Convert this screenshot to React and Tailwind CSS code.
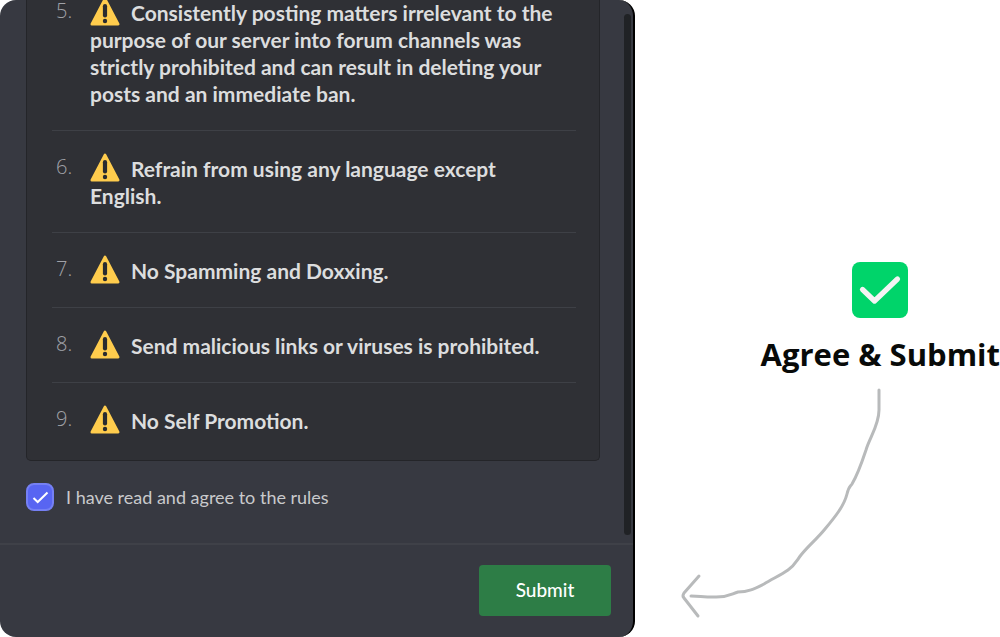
import React, { useState } from 'react';

const rules = [
  {
    id: 5,
    text: 'Consistently posting matters irrelevant to the purpose of our server into forum channels was strictly prohibited and can result in deleting your posts and an immediate ban.',
  },
  { id: 6, text: 'Refrain from using any language except English.' },
  { id: 7, text: 'No Spamming and Doxxing.' },
  { id: 8, text: 'Send malicious links or viruses is prohibited.' },
  { id: 9, text: 'No Self Promotion.' },
];

const WarningIcon = () => (
  <svg viewBox="0 0 30 29" className="-my-2 mr-[11px] inline-block h-[29px] w-[30px] align-[3px]" aria-hidden="true">
    <path d="M15 1.8 L28.2 27.2 H1.8 Z" fill="#ffcc4d" stroke="#ffcc4d" strokeWidth="2.6" strokeLinejoin="round" />
    <path d="M15 9.2 V18.4" stroke="#2a2b2f" strokeWidth="4.2" strokeLinecap="round" />
    <circle cx="15" cy="24" r="2.2" fill="#2a2b2f" />
  </svg>
);

const App = () => {
  const [agreed, setAgreed] = useState(true);

  return (
    <div className="flex min-h-screen bg-white font-['Lato',sans-serif]">
      {/* Rules dialog */}
      <div className="flex w-[63.5%] shrink-0 flex-col overflow-hidden rounded-2xl border-r-2 border-black bg-[#373941]">
        <div className="flex flex-1">
          <div className="flex-1 pl-[26px]">
            <ol className="-mt-px rounded-b-[5px] border border-t-0 border-[#242529] bg-[#2f3035] pr-[23px] pb-[3px] pl-[25px]">
              {rules.map((rule) => (
                <li
                  key={rule.id}
                  className="flex border-b border-[#3e4046] pt-6 pb-[23px] first:pt-0 last:border-b-0"
                >
                  <span className="w-[38px] shrink-0 pl-1 font-['Open_Sans',sans-serif] text-xl leading-[23px] font-light text-[#a0a2a8]">
                    {rule.id}.
                  </span>
                  <p className="pr-2 text-[21px] leading-[27px] font-bold text-[#dcddde]">
                    <WarningIcon />
                    {rule.text}
                  </p>
                </li>
              ))}
            </ol>
            <label className="mt-[22px] flex w-fit items-center gap-3 text-lg leading-7 text-[#c9cacc]">
              <span className="relative flex">
                <input
                  type="checkbox"
                  checked={agreed}
                  onChange={(e) => setAgreed(e.target.checked)}
                  className="h-7 w-7 appearance-none rounded-lg border-2 border-[#7580f4] checked:bg-[#5865f2]"
                />
                {agreed && (
                  <svg viewBox="0 0 28 28" className="pointer-events-none absolute inset-0" aria-hidden="true">
                    <path d="M7.5 15 L11.7 19 L21.5 9.5" fill="none" stroke="#fff" strokeWidth="2" />
                  </svg>
                )}
              </span>
              I have read and agree to the rules
            </label>
          </div>
          <div className="mt-[14px] mr-[2px] mb-2 ml-6 w-[7px] rounded-full bg-[#202225]" />
        </div>
        <div className="flex justify-end border-t-2 border-[#3f4148] pt-5 pr-[22px] pb-[21px]">
          <button
            type="button"
            className="h-[51px] w-[132px] rounded bg-[#2d7d46] text-[19px] font-medium text-white"
          >
            Submit
          </button>
        </div>
      </div>

      {/* Hint next to the dialog */}
      <div className="flex flex-1 flex-col items-end pt-[262px]">
        <div className="flex flex-col items-center">
          <svg viewBox="0 0 56 56" className="h-14 w-14" aria-hidden="true">
            <rect width="56" height="56" rx="8" fill="#00d46a" />
            <path
              d="M10.5 27.5 L22.5 39 L45.5 17"
              fill="none"
              stroke="#f4f4f4"
              strokeWidth="5.2"
              strokeLinecap="round"
              strokeLinejoin="round"
            />
          </svg>
          <h2 className="mt-4 font-['Open_Sans',sans-serif] text-[31px] leading-10 font-bold whitespace-nowrap text-[#080a09]">
            Agree &amp; Submit
          </h2>
        </div>
        <svg
          viewBox="0 0 202 232"
          className="mt-[13px] mr-[118px] h-[232px] w-[202px]"
          fill="none"
          stroke="#b8babb"
          strokeWidth="3"
          strokeLinecap="round"
          strokeLinejoin="round"
          aria-hidden="true"
        >
          <path d="M199 3 V23 C199 38 190 50 186 63 C182 75 178 87 172 97 C170 100 169 99 167 107 C164 119 155 130 145 142 C136 153 129 158 121 168 C117 173 115 178 108 183 C101 188 92 192 84 197 C74 202 68 205 58 205 C51 207 47 211 33 210 C24 210 18 209 11 209" />
          <path d="M19 189 L4 206 Q2 209 4 211 L18 229" />
        </svg>
      </div>
    </div>
  );
};

export default App;
